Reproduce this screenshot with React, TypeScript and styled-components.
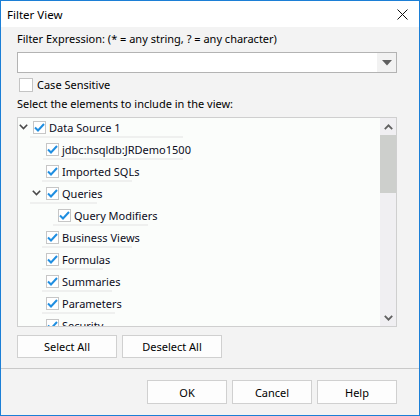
import React from "react";
import styled, { createGlobalStyle } from "styled-components";

const Global = createGlobalStyle`
  html, body { margin: 0; padding: 0; background: #ffffff; }
  * { box-sizing: border-box; }
  body { font-family: "Noto Sans", "Open Sans", sans-serif; font-size: 11px; color: #000; }
`;

const Window = styled.div`
  width: 420px;
  height: 416px;
  border: 1px solid #1c7fd6;
  display: flex;
  flex-direction: column;
  background: #f3f3f3;
  overflow: hidden;
`;

const TitleBar = styled.div`
  height: 26px;
  background: #ffffff;
  display: flex;
  align-items: center;
  justify-content: space-between;
  padding: 0 11px 0 6px;
  font-size: 11.5px;
`;

const Body = styled.div`
  display: flex;
  flex-direction: column;
  padding: 0 22px 10px 16px;
`;

const Label = styled.div<{ $top: number }>`
  margin-top: ${(p) => p.$top}px;
  height: 16px;
  line-height: 16px;
  white-space: nowrap;
`;

const Combo = styled.div`
  margin-top: 5px;
  height: 21px;
  border: 1px solid #b3b3b3;
  background: #ffffff;
  display: flex;
  justify-content: flex-end;
`;

const ComboButton = styled.div`
  width: 19px;
  background: #f2f2f2;
  display: flex;
  align-items: center;
  justify-content: center;
`;

const CheckRow = styled.label`
  margin-top: 4px;
  height: 16px;
  display: flex;
  align-items: center;
  gap: 4px;
  padding-left: 2px;
  line-height: 16px;
`;

const EmptyBox = styled.span`
  width: 14px;
  height: 14px;
  border: 1px solid #c4c4c4;
  background: #ffffff;
`;

const TreeBox = styled.div`
  margin-top: 5px;
  height: 210px;
  border: 1px solid #cfcfcf;
  background: #fbfdfb;
  display: flex;
`;

const TreeList = styled.div`
  flex: 1;
  overflow: hidden;
  display: flex;
  flex-direction: column;
`;

const TreeInner = styled.div`
  margin-top: -2px;
  display: flex;
  flex-direction: column;
`;

const Row = styled.div<{ $indent: number }>`
  height: 22px;
  flex: none;
  display: flex;
  align-items: center;
  padding-left: ${(p) => p.$indent}px;
  position: relative;
`;

const Strip = styled.span`
  position: absolute;
  bottom: 0;
  height: 2px;
  background: #eff0ef;
`;

const Expander = styled.span`
  width: 15px;
  height: 22px;
  display: flex;
  align-items: center;
  padding-left: 1px;
`;

const CheckBox = styled.span`
  width: 13px;
  height: 13px;
  border: 1px solid #c6c6c6;
  background: #ffffff;
  display: flex;
  align-items: center;
  justify-content: center;
  position: relative;
  z-index: 1;
`;

const RowText = styled.span`
  margin-left: 3px;
  white-space: nowrap;
  position: relative;
  z-index: 1;
  color: #0c0c1c;
`;

const ScrollBar = styled.div`
  width: 16px;
  background: #f0eff2;
  display: flex;
  flex-direction: column;
  align-items: stretch;
`;

const ScrollArrow = styled.div`
  height: 17px;
  display: flex;
  align-items: center;
  justify-content: center;
`;

const Thumb = styled.div`
  height: 58px;
  background: #cdcfcc;
`;

const ScrollSpace = styled.div`
  flex: 1;
`;

const ButtonRow = styled.div`
  margin-top: 8px;
  display: flex;
  gap: 5px;
`;

const Button = styled.button<{ $w: number; $h: number }>`
  width: ${(p) => p.$w}px;
  height: ${(p) => p.$h}px;
  border: 1px solid #d0d0d0;
  background: #fdfdfd;
  font-family: "Noto Sans", "Open Sans", sans-serif;
  font-size: 11px;
  color: #000;
  padding: 0;
`;

const Separator = styled.div`
  height: 1px;
  background: #c9c9c9;
`;

const Footer = styled.div`
  flex: 1;
  display: flex;
  justify-content: flex-end;
  align-items: flex-start;
  gap: 5px;
  padding: 11px 22px 0 0;
`;

const Check = () => (
  <svg width="11" height="9" viewBox="0 0 11 9">
    <path d="M1 4.5 L4 7.5 L10 1" fill="none" stroke="#1f8ee0" strokeWidth="2" />
  </svg>
);

const Chevron = () => (
  <svg width="9" height="6" viewBox="0 0 9 6">
    <path d="M0.8 0.8 L4.5 4.6 L8.2 0.8" fill="none" stroke="#4a4a4a" strokeWidth="1.6" />
  </svg>
);

type Node = { label: string; level: number; expandable?: boolean; strip: [number, number] };

const nodes: Node[] = [
  { label: "Data Source 1", level: 0, expandable: true, strip: [12, 165] },
  { label: "jdbc:hsqldb:JRDemo1500", level: 1, strip: [25, 165] },
  { label: "Imported SQLs", level: 1, strip: [24, 114] },
  { label: "Queries", level: 1, expandable: true, strip: [12, 79] },
  { label: "Query Modifiers", level: 2, strip: [35, 130] },
  { label: "Business Views", level: 1, strip: [24, 114] },
  { label: "Formulas", level: 1, strip: [24, 85] },
  { label: "Summaries", level: 1, strip: [24, 94] },
  { label: "Parameters", level: 1, strip: [24, 97] },
  { label: "Security", level: 1, strip: [24, 90] },
];

export default function App() {
  return (
    <>
      <Global />
      <Window>
        <TitleBar>
          <span>Filter View</span>
          <svg width="11" height="11" viewBox="0 0 11 11">
            <path d="M0.5 0.5 L10.5 10.5 M10.5 0.5 L0.5 10.5" stroke="#111" strokeWidth="1" />
          </svg>
        </TitleBar>
        <Body>
          <Label $top={4}>Filter Expression: (* = any string, ? = any character)</Label>
          <Combo>
            <ComboButton>
              <svg width="10" height="6" viewBox="0 0 10 6">
                <path d="M0 0 H10 L5 5.5 Z" fill="#5f5f5f" />
              </svg>
            </ComboButton>
          </Combo>
          <CheckRow>
            <EmptyBox />
            <span>Case Sensitive</span>
          </CheckRow>
          <Label $top={3}>Select the elements to include in the view:</Label>
          <TreeBox>
            <TreeList>
              <TreeInner>
                {nodes.map((n) => (
                  <Row key={n.label} $indent={Math.round(n.level * 12.6)}>
                    <Strip style={{ left: n.strip[0], width: n.strip[1] - n.strip[0] }} />
                    <Expander>{n.expandable ? <Chevron /> : null}</Expander>
                    <CheckBox>
                      <Check />
                    </CheckBox>
                    <RowText>{n.label}</RowText>
                  </Row>
                ))}
              </TreeInner>
            </TreeList>
            <ScrollBar>
              <ScrollArrow>
                <svg width="9" height="6" viewBox="0 0 9 6">
                  <path d="M0.8 5.2 L4.5 1.4 L8.2 5.2" fill="none" stroke="#606060" strokeWidth="1.8" />
                </svg>
              </ScrollArrow>
              <Thumb />
              <ScrollSpace />
              <ScrollArrow>
                <svg width="9" height="6" viewBox="0 0 9 6">
                  <path d="M0.8 0.8 L4.5 4.6 L8.2 0.8" fill="none" stroke="#606060" strokeWidth="1.8" />
                </svg>
              </ScrollArrow>
            </ScrollBar>
          </TreeBox>
          <ButtonRow>
            <Button $w={100} $h={23}>Select All</Button>
            <Button $w={100} $h={23}>Deselect All</Button>
          </ButtonRow>
        </Body>
        <Separator />
        <Footer>
          <Button $w={80} $h={24}>OK</Button>
          <Button $w={80} $h={24}>Cancel</Button>
          <Button $w={80} $h={24}>Help</Button>
        </Footer>
      </Window>
    </>
  );
}
